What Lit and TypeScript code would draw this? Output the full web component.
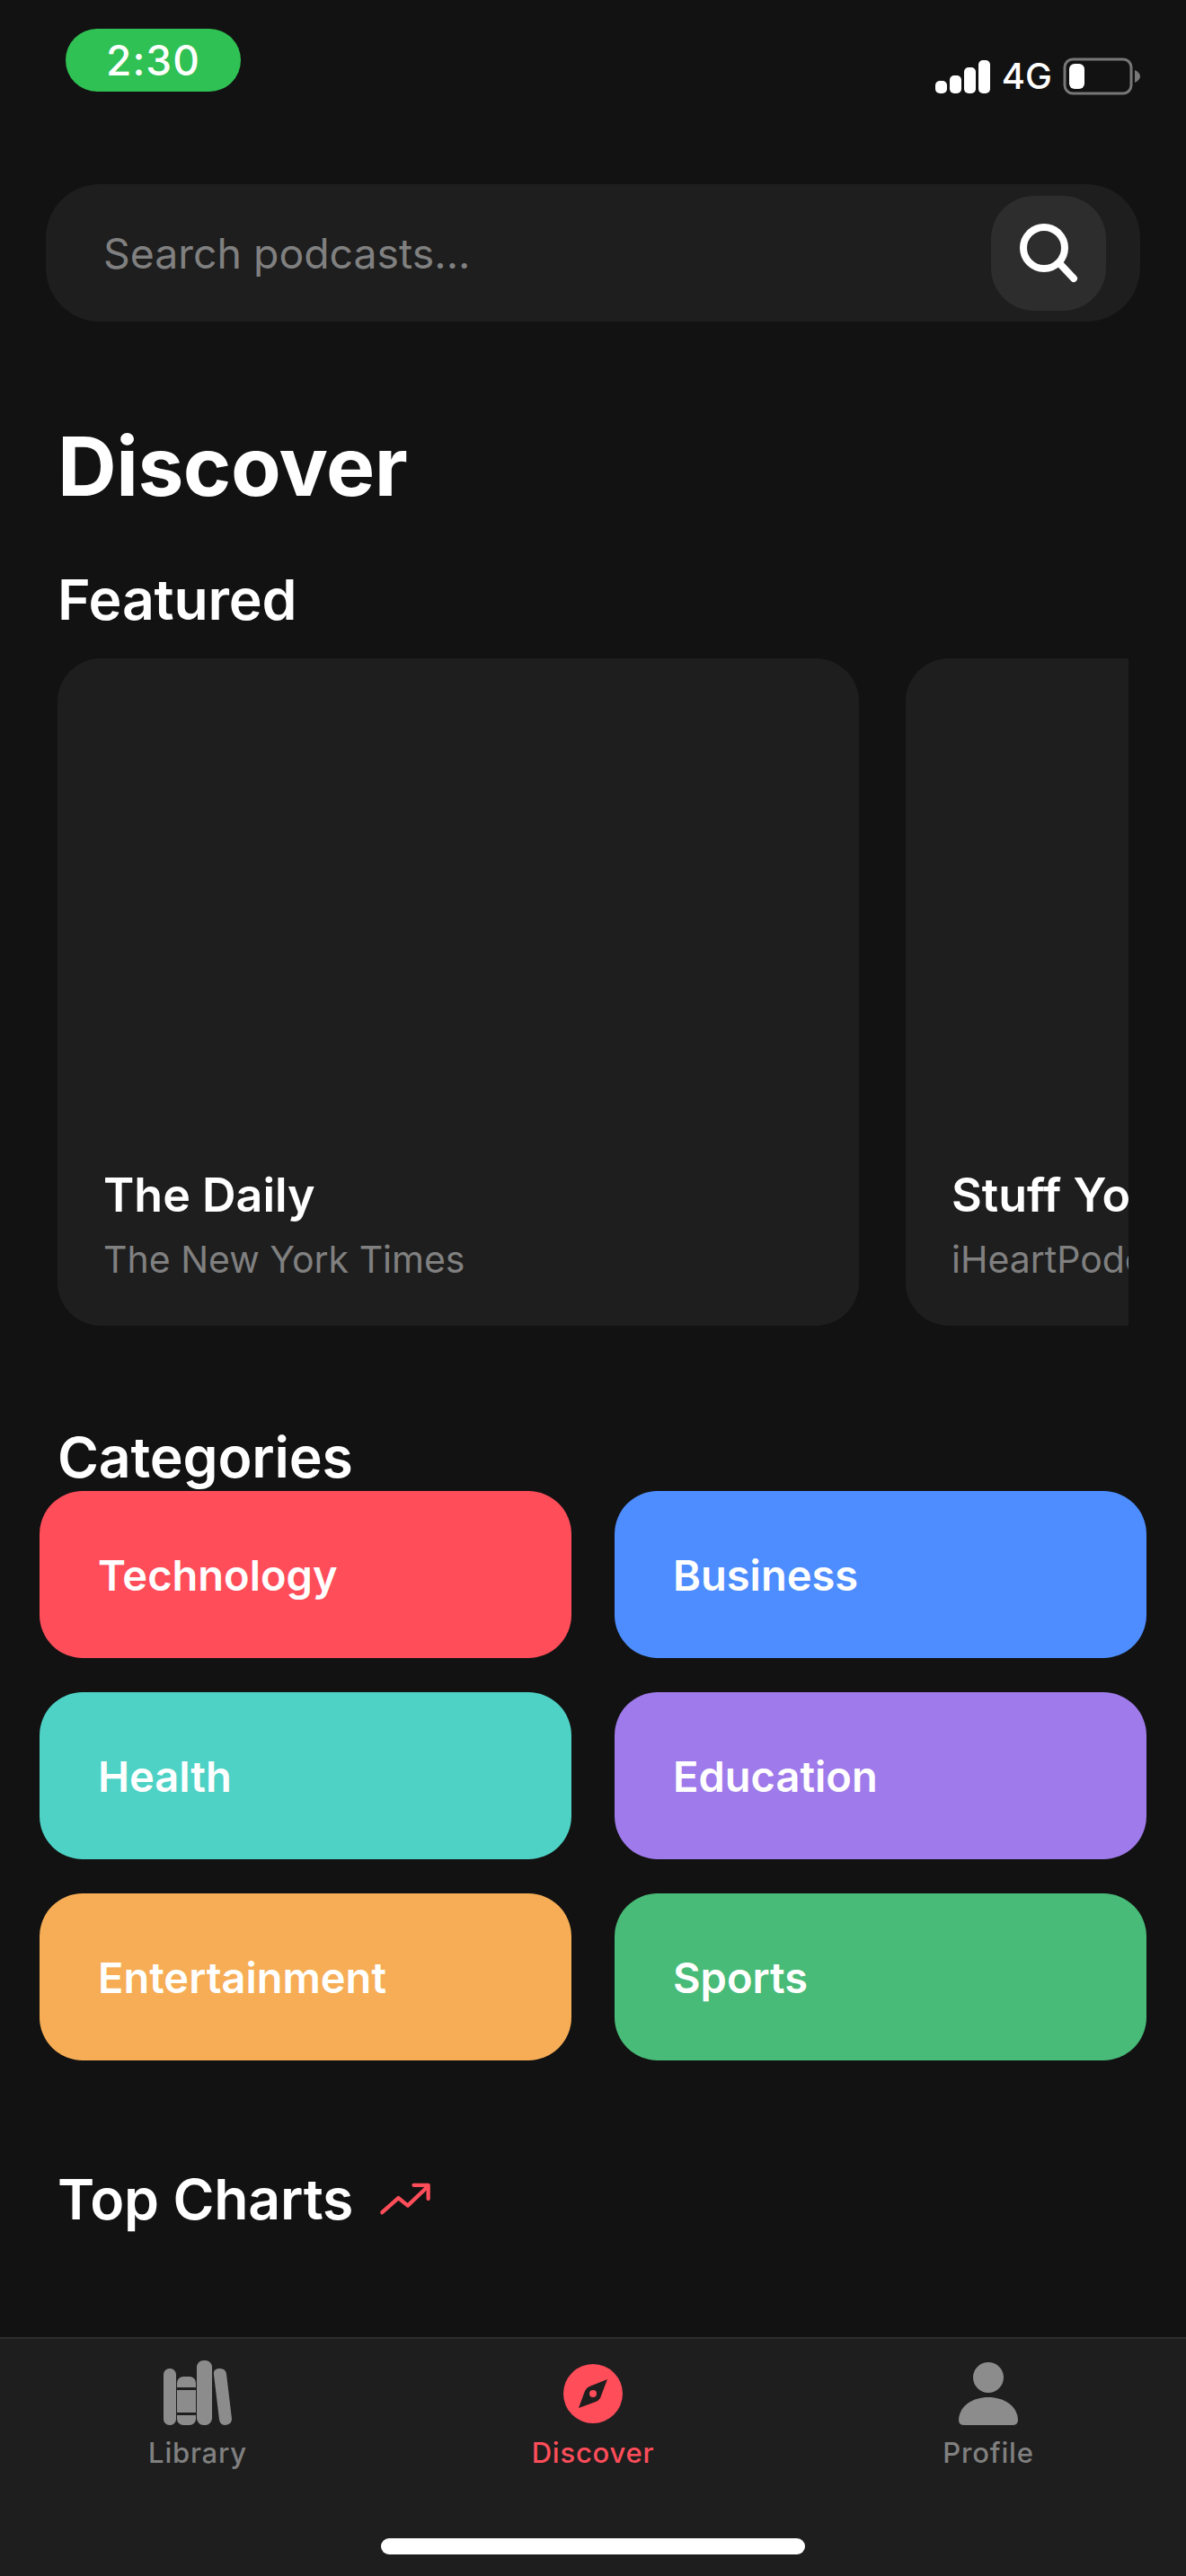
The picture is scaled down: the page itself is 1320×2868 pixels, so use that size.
import { LitElement, html, css } from "lit";
import { customElement } from "lit/decorators.js";

const CATS = [
  ["Technology", "#ff4d5a"],
  ["Business", "#4d8dff"],
  ["Health", "#4ed2c5"],
  ["Education", "#9f7aea"],
  ["Entertainment", "#f6ad55"],
  ["Sports", "#48bb78"],
];

@customElement("app-root")
export class AppRoot extends LitElement {
  static styles = css`
    :host { display: block; width: 1320px; height: 2868px; background: #121212; color: #fff; font-family: Inter, "Liberation Sans", sans-serif; overflow: hidden; }
    .page { height: 2868px; display: flex; flex-direction: column; }
    .status { height: 205px; flex: none; display: flex; justify-content: space-between; align-items: flex-start; padding: 32px 51px 0 73px; box-sizing: border-box; }
    .pill { width: 195px; height: 70px; border-radius: 35px; background: #30c154; display: flex; align-items: center; justify-content: center; font-size: 46px; letter-spacing: 1px; font-weight: 500; }
    .sys { display: flex; align-items: center; gap: 12px; margin-top: 28px; font-size: 40px; font-weight: 500; }
    .sys svg { display: block; }
    .search { flex: none; margin: 0 51px; height: 153px; border-radius: 60px; background: #1e1e1e; display: flex; align-items: center; justify-content: space-between; padding: 0 38px 0 64px; }
    .search span { font-size: 46.4px; color: #808080; }
    .sbtn { width: 128px; height: 128px; border-radius: 48px; background: #2d2d2d; display: flex; align-items: center; justify-content: center; }
    h1 { margin: 108px 0 0 64px; font-size: 91px; line-height: 106px; font-weight: 700; letter-spacing: -0.5px; }
    h2 { margin: 0 0 0 64px; font-size: 62.5px; line-height: 72px; font-weight: 600; letter-spacing: -0.2px; }
    .featured-h { margin-top: 59px; }
    .scroller { margin: 30px 0 0 64px; width: 1192px; height: 743px; display: flex; gap: 52px; overflow: hidden; flex: none; }
    .card { flex: none; width: 892px; height: 743px; border-radius: 48px; background: #1e1e1e; box-sizing: border-box; padding: 0 51px 48px; display: flex; flex-direction: column; justify-content: flex-end; white-space: nowrap; overflow: hidden; }
    .card b { font-size: 52px; font-weight: 600; line-height: 62px; }
    .card i { font-style: normal; font-size: 41px; line-height: 52px; color: #808080; margin-top: 14px; }
    .cat-h { margin-top: 108px; line-height: 76px; }
    .grid { margin: 0 44px; display: grid; grid-template-columns: 592px 592px; column-gap: 48px; row-gap: 38px; flex: none; }
    .cat { height: 186px; border-radius: 48px; display: flex; align-items: center; padding-left: 65px; font-size: 47px; font-weight: 600; }
    .top { margin: 118px 0 0 64px; display: flex; align-items: center; gap: 29px; }
    .top h2 { margin: 0; }
    nav { margin-top: auto; flex: none; height: 266px; background: #1e1e1e; border-top: 2px solid #2d2d2d; box-sizing: border-box; position: relative; display: grid; grid-template-columns: 440px 440px 440px; }
    .tab { display: flex; flex-direction: column; align-items: center; padding-top: 24px; color: #808080; font-size: 31px; font-weight: 500; letter-spacing: 0.8px; }
    .tab svg { display: block; height: 80px; width: 80px; }
    .tab span { margin-top: 3px; line-height: 40px; }
    .tab.on { color: #ff4d5a; }
    .home { position: absolute; left: 424px; top: 222px; width: 472px; height: 18px; border-radius: 9px; background: #fff; }
  `;

  render() {
    return html`<div class="page">
      <div class="status">
        <div class="pill">2:30</div>
        <div class="sys">
          <svg width="62" height="38" viewBox="0 0 62 38" fill="#fff"><rect x="0" y="24" width="13" height="14" rx="5"/><rect x="16" y="18" width="13" height="20" rx="5"/><rect x="32" y="9" width="13" height="29" rx="5"/><rect x="48" y="1" width="13" height="37" rx="5"/></svg>
          <span>4G</span>
          <svg width="86" height="42" viewBox="0 0 86 42"><rect x="2" y="2" width="74" height="38" rx="9" fill="none" stroke="#777" stroke-width="3"/><rect x="7" y="7" width="17" height="28" rx="6" fill="#fff"/><path d="M80 14 q6 3 6 7 q0 4 -6 7z" fill="#777"/></svg>
        </div>
      </div>
      <div class="search">
        <span>Search podcasts...</span>
        <div class="sbtn"><svg width="72" height="72" viewBox="0 0 72 72" fill="none" stroke="#fff" stroke-width="8" stroke-linecap="round"><circle cx="31" cy="30" r="23"/><path d="M48 47 L64 64"/></svg></div>
      </div>
      <h1>Discover</h1>
      <h2 class="featured-h">Featured</h2>
      <div class="scroller">
        <div class="card"><b>The Daily</b><i>The New York Times</i></div>
        <div class="card"><b>Stuff You Should Know</b><i>iHeartPodcasts</i></div>
      </div>
      <h2 class="cat-h">Categories</h2>
      <div class="grid">
        ${CATS.map(([n, c]) => html`<div class="cat" style="background:${c}">${n}</div>`)}
      </div>
      <div class="top">
        <h2>Top Charts</h2>
        <svg width="58" height="38" viewBox="0 0 60 40" fill="none" stroke="#ff4d5a" stroke-width="4.5" stroke-linecap="round" stroke-linejoin="round"><path d="M3 36 L22 19 L33 28 L56 6"/><path d="M40 4 H57 V20"/></svg>
      </div>
      <nav>
        <div class="tab">
          <svg viewBox="0 0 80 80" fill="#8c8c8c"><rect x="2" y="9" width="14" height="63" rx="6.5"/><rect x="17" y="18" width="21" height="54" rx="7"/><rect x="39" y="0" width="17" height="72" rx="7.5"/><path d="M63 9 q-6 1 -5 7 l6 50 q1 6 7 6 q7 -1 7 -7 l-6 -50 q-1 -7 -9 -6z"/><rect x="17" y="30" width="21" height="3" fill="#1e1e1e"/><rect x="17" y="58" width="21" height="3" fill="#1e1e1e"/></svg>
          <span>Library</span>
        </div>
        <div class="tab on">
          <svg viewBox="0 0 80 80"><circle cx="40" cy="37" r="33" fill="#ff4d5a"/><path d="M56 21 L48 42 Q46 45 43 46 L24 53 L31 34 Q33 30 36 29Z" fill="#1e1e1e"/><circle cx="40" cy="37" r="4" fill="#ff4d5a"/></svg>
          <span>Discover</span>
        </div>
        <div class="tab">
          <svg viewBox="0 0 80 80" fill="#8c8c8c"><circle cx="40" cy="19" r="17"/><path d="M7 66 C8 50 23 41 40 41 C57 41 72 50 73 66 Q73 72 67 72 H13 Q7 72 7 66Z"/></svg>
          <span>Profile</span>
        </div>
        <div class="home"></div>
      </nav>
    </div>`;
  }
}
